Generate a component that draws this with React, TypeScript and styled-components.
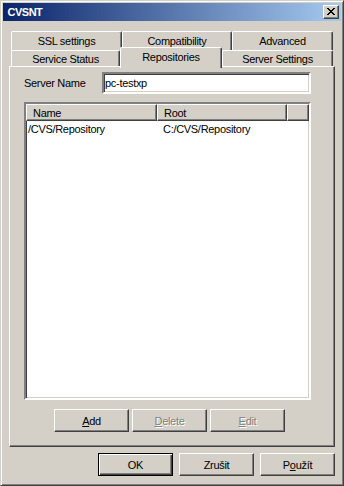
import styled, { createGlobalStyle, css } from 'styled-components';

const GlobalStyle = createGlobalStyle`
  html, body {
    margin: 0;
    padding: 0;
    background: #d4d0c8;
  }
  body {
    font-family: 'Liberation Sans', Arial, sans-serif;
    font-size: 11px;
    letter-spacing: -0.3px;
    color: #000;
  }
`;

const raised = css`
  border: 1px solid;
  border-color: #fff #404040 #404040 #fff;
  box-shadow: inset -1px -1px #808080;
`;

const sunken = css`
  border: 2px solid;
  border-color: #808080 #fff #fff #808080;
  box-shadow: inset 1px 1px #404040, inset -1px -1px #d4d0c8;
`;

const Window = styled.div`
  box-sizing: border-box;
  width: 344px;
  height: 486px;
  padding: 2px;
  background: #d4d0c8;
  border: 1px solid;
  border-color: #d4d0c8 #404040 #404040 #d4d0c8;
  box-shadow: inset 1px 1px #fff, inset -1px -1px #808080;
  display: flex;
  flex-direction: column;
`;

const TitleBar = styled.div`
  height: 18px;
  flex: none;
  display: flex;
  align-items: center;
  padding: 0 2px 0 2px;
  background: linear-gradient(to right, #0a246a, #a6caf0);
`;

const Title = styled.span`
  color: #fff;
  font-weight: bold;
  letter-spacing: -0.5px;
`;

const CloseButton = styled.div`
  box-sizing: border-box;
  width: 16px;
  height: 14px;
  margin-left: auto;
  padding: 2px 0 0 3px;
  background: #d4d0c8;
  ${raised}
  svg {
    display: block;
  }
`;

const Body = styled.div`
  flex: 1;
  display: flex;
  flex-direction: column;
  padding: 10px 6px 0;
`;

const TabStrip = styled.div`
  display: flex;
  flex-direction: column;
  padding: 0 2px;
`;

const TabRow = styled.div<{ $h: number }>`
  height: ${p => p.$h}px;
  display: flex;
  align-items: flex-end;
`;

const Tab = styled.div<{ $w: number; $active?: boolean }>`
  box-sizing: border-box;
  flex: none;
  width: ${p => p.$w}px;
  height: 100%;
  display: flex;
  align-items: center;
  justify-content: center;
  background: #d4d0c8;
  border-top: 1px solid #fff;
  border-left: 1px solid #fff;
  border-right: 1px solid #404040;
  box-shadow: inset -1px 0 #808080;
  border-radius: 2px 2px 0 0;
  ${p =>
    p.$active &&
    css`
      height: 21px;
      margin-bottom: -2px;
      padding-bottom: 2px;
      position: relative;
      z-index: 1;
    `}
`;

const Panel = styled.div`
  box-sizing: border-box;
  height: 381px;
  flex: none;
  display: flex;
  flex-direction: column;
  padding: 5px 23px 0 14px;
  ${raised}
`;

const FieldRow = styled.div`
  height: 22px;
  display: flex;
  align-items: center;
`;

const Label = styled.span`
  width: 78px;
  flex: none;
`;

const TextField = styled.input`
  box-sizing: border-box;
  flex: 1;
  min-width: 0;
  height: 22px;
  margin: 0;
  padding: 0 1px;
  font: inherit;
  letter-spacing: inherit;
  color: #000;
  background: #fff;
  outline: none;
  ${sunken}
`;

const ListBox = styled.div`
  box-sizing: border-box;
  height: 298px;
  margin-top: 8px;
  background: #fff;
  ${sunken}
`;

const HeaderRow = styled.div`
  display: flex;
  height: 17px;
`;

const HeaderCell = styled.div<{ $w?: number }>`
  box-sizing: border-box;
  height: 17px;
  ${p => (p.$w ? `width: ${p.$w}px; flex: none;` : 'flex: 1;')}
  padding: 2px 0 0 6px;
  line-height: 13px;
  background: #d4d0c8;
  ${raised}
`;

const ItemRow = styled.div`
  display: flex;
  height: 17px;
  line-height: 17px;
`;

const ItemCell = styled.div<{ $w: number; $pad: number }>`
  width: ${p => p.$w}px;
  flex: none;
  padding-left: ${p => p.$pad}px;
  box-sizing: border-box;
  white-space: nowrap;
`;

const ButtonRow = styled.div<{ $gap: number }>`
  display: flex;
  gap: ${p => p.$gap}px;
`;

const PanelButtons = styled(ButtonRow)`
  margin-top: 9px;
  padding-left: 30px;
`;

const Footer = styled(ButtonRow)`
  margin-top: 6px;
  justify-content: flex-end;
`;

const Button = styled.div<{ $default?: boolean; $disabled?: boolean }>`
  box-sizing: border-box;
  width: 75px;
  height: 23px;
  display: flex;
  align-items: center;
  justify-content: center;
  background: #d4d0c8;
  ${raised}
  ${p =>
    p.$default &&
    css`
      border: 1px solid #000;
      box-shadow: inset 1px 1px #fff, inset -1px -1px #404040,
        inset -2px -2px #808080;
    `}
  ${p =>
    p.$disabled &&
    css`
      color: #808080;
      text-shadow: 1px 1px 0 #fff;
    `}
`;

const CloseGlyph = () => (
  <svg width="8" height="7" viewBox="0 0 8 7">
    <path
      fill="#000"
      d="M0 0h2v1H0z M6 0h2v1H6z M1 1h2v1H1z M5 1h2v1H5z M2 2h4v1H2z M3 3h2v1H3z M2 4h4v1H2z M1 5h2v1H1z M5 5h2v1H5z M0 6h2v1H0z M6 6h2v1H6z"
    />
  </svg>
);

export default function App() {
  return (
    <>
      <GlobalStyle />
      <Window>
        <TitleBar>
          <Title>&nbsp;CVSNT</Title>
          <CloseButton>
            <CloseGlyph />
          </CloseButton>
        </TitleBar>
        <Body>
          <TabStrip>
            <TabRow $h={19}>
              <Tab $w={111}>SSL settings</Tab>
              <Tab $w={110}>Compatibility</Tab>
              <Tab $w={101}>Advanced</Tab>
            </TabRow>
            <TabRow $h={16}>
              <Tab $w={109}>Service Status</Tab>
              <Tab $w={102} $active>
                Repositories
              </Tab>
              <Tab $w={111}>Server Settings</Tab>
            </TabRow>
          </TabStrip>
          <Panel>
            <FieldRow>
              <Label>Server Name</Label>
              <TextField defaultValue="pc-testxp" readOnly />
            </FieldRow>
            <ListBox>
              <HeaderRow>
                <HeaderCell $w={131}>Name</HeaderCell>
                <HeaderCell $w={130}>Root</HeaderCell>
                <HeaderCell />
              </HeaderRow>
              <ItemRow>
                <ItemCell $w={131} $pad={2}>
                  /CVS/Repository
                </ItemCell>
                <ItemCell $w={130} $pad={6}>
                  C:/CVS/Repository
                </ItemCell>
              </ItemRow>
            </ListBox>
            <PanelButtons $gap={3}>
              <Button>
                <u>A</u>dd
              </Button>
              <Button $disabled>
                <u>D</u>elete
              </Button>
              <Button $disabled>
                <u>E</u>dit
              </Button>
            </PanelButtons>
          </Panel>
          <Footer $gap={6}>
            <Button $default>OK</Button>
            <Button>Zrušit</Button>
            <Button>
              P<u>o</u>užít
            </Button>
          </Footer>
        </Body>
      </Window>
    </>
  );
}
